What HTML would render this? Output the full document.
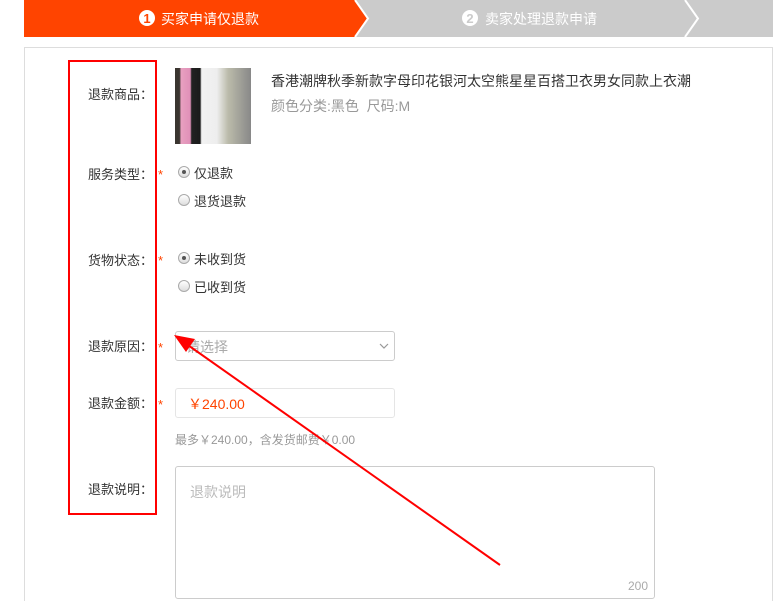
<!DOCTYPE html>
<html style="width:773px;height:601px;overflow:hidden"><head><meta charset="utf-8"><style>
body{margin:0;width:773px;height:601px;background:#fff;font-family:"Liberation Sans","Noto Sans CJK SC",sans-serif;font-size:13px;color:#333;position:relative;overflow:hidden}
.a{position:absolute}
.lbl{position:absolute;left:88px;font-size:13px;color:#333;font-family:"Noto Sans CJK SC",sans-serif;line-height:16px}
.lbl i{font-style:normal;display:inline-block;width:13px;text-align:center}
.star{color:#f40;position:absolute;left:158px;font-size:13px}
.radio{position:absolute;left:178px;width:10px;height:10px;border:1px solid #aaa;border-radius:50%;background:linear-gradient(#fff,#ddd)}
.radio.on::after{content:"";position:absolute;left:3px;top:3px;width:4px;height:4px;border-radius:50%;background:#555}
.rt{position:absolute;left:194px;font-size:13px;color:#333;font-family:"Noto Sans CJK SC",sans-serif;line-height:16px}
</style></head><body>
<svg class="a" style="left:0;top:0" width="773" height="37">
<rect x="24" y="0" width="749" height="37" fill="#cbcbcb"/>
<polygon points="24,0 355,0 368,18.5 355,37 24,37" fill="#ff4400"/>
<polyline points="355,0 368,18.5 355,37" fill="none" stroke="#fff" stroke-width="2"/>
<polyline points="685,0 698,18.5 685,37" fill="none" stroke="#fff" stroke-width="2"/>
<circle cx="147" cy="18" r="8" fill="#fff"/><text x="147" y="23" font-size="13" font-weight="bold" text-anchor="middle" fill="#ff4400" font-family="Liberation Sans">1</text>
<text x="161" y="24" font-size="14" fill="#fff" font-family="Noto Sans CJK SC">买家申请仅退款</text>
<circle cx="470" cy="18" r="8" fill="#fff"/><text x="470" y="23" font-size="13" font-weight="bold" text-anchor="middle" fill="#cbcbcb" font-family="Liberation Sans">2</text>
<text x="485" y="24" font-size="14" fill="#fff" font-family="Noto Sans CJK SC">卖家处理退款申请</text>
</svg>
<div class="a" style="left:24px;top:47px;width:747px;height:554px;border:1px solid #ddd;border-bottom:none"></div>
<div class="lbl" style="top:86px">退款商品<i>：</i></div>
<div class="a" style="left:175px;top:68px;width:76px;height:76px;background:linear-gradient(90deg,#3a3530 0,#3a3530 6%,#e8a0c0 8%,#e090b8 20%,#222 22%,#1a1a1a 33%,#f2f2f2 35%,#eee 55%,#bba 70%,#888 100%)"></div>
<div class="a" style="left:271px;top:71px;font-size:14px;color:#333">香港潮牌秋季新款字母印花银河太空熊星星百搭卫衣男女同款上衣潮</div>
<div class="a" style="left:271px;top:96px;font-size:14px;color:#999">颜色分类:黑色&nbsp;&nbsp;尺码:M</div>
<div class="lbl" style="top:166px">服务类型<i>：</i></div><span class="star" style="top:167px">*</span>
<div class="radio on" style="top:166px"></div><div class="rt" style="top:165px">仅退款</div>
<div class="radio" style="top:194px"></div><div class="rt" style="top:193px">退货退款</div>
<div class="lbl" style="top:252px">货物状态<i>：</i></div><span class="star" style="top:253px">*</span>
<div class="radio on" style="top:252px"></div><div class="rt" style="top:251px">未收到货</div>
<div class="radio" style="top:280px"></div><div class="rt" style="top:279px">已收到货</div>
<div class="lbl" style="top:338px">退款原因<i>：</i></div><span class="star" style="top:340px">*</span>
<div class="a" style="left:175px;top:331px;width:218px;height:28px;border:1px solid #ccc;border-radius:3px"></div>
<div class="a" style="left:186px;top:337px;color:#aaa;font-size:14px">请选择</div>
<svg class="a" style="left:379px;top:342px" width="10" height="8"><polyline points="1,2 5,6 9,2" fill="none" stroke="#999" stroke-width="1.2"/></svg>
<div class="lbl" style="top:395px">退款金额<i>：</i></div><span class="star" style="top:397px">*</span>
<div class="a" style="left:175px;top:388px;width:218px;height:28px;border:1px solid #e5e5e5;border-radius:3px"></div>
<div class="a" style="left:188px;top:394px;color:#f40;font-size:14px">￥240.00</div>
<div class="a" style="left:175px;top:431px;color:#999;font-size:12px">最多￥240.00，含发货邮费￥0.00</div>
<div class="lbl" style="top:481px">退款说明<i>：</i></div>
<div class="a" style="left:175px;top:466px;width:478px;height:131px;border:1px solid #ccc;border-radius:3px"></div>
<div class="a" style="left:190px;top:482px;color:#bbb;font-size:14px">退款说明</div>
<div class="a" style="left:628px;top:579px;color:#aaa;font-size:12px">200</div>
<div class="a" style="left:68px;top:60px;width:85px;height:451px;border:2px solid #f00"></div>
<svg class="a" style="left:0;top:0" width="773" height="601"><line x1="500" y1="565" x2="185" y2="343" stroke="#f00" stroke-width="2"/><polygon points="174,335 195,339 186,352" fill="#f00"/></svg>
</body></html>
